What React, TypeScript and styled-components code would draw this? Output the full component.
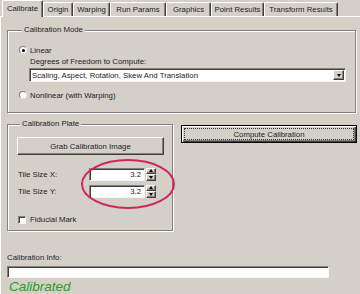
import React from 'react';
import styled, { createGlobalStyle } from 'styled-components';

const GlobalStyle = createGlobalStyle`
  html, body {
    margin: 0;
    padding: 0;
    background: #d4d0c8;
  }
  body {
    font-family: "Liberation Sans", Arial, sans-serif;
    font-size: 7.8px;
    color: #1c1c1c;
  }
`;

const TABS = [
  { label: 'Calibrate', w: 41 },
  { label: 'Origin', w: 30 },
  { label: 'Warping', w: 37 },
  { label: 'Run Params', w: 56 },
  { label: 'Graphics', w: 45 },
  { label: 'Point Results', w: 53 },
  { label: 'Transform Results', w: 74 },
];

const App = () => {
  return (
    <>
      <GlobalStyle />
      <Window>
        <TabBar>
          {TABS.map((t, i) => (
            <Tab key={t.label} $w={t.w} $active={i === 0}>
              {t.label}
            </Tab>
          ))}
        </TabBar>
        <Panel>
          <Group>
            <Legend>Calibration Mode</Legend>
            <OptionRow>
              <Radio $checked />
              <span>Linear</span>
            </OptionRow>
            <Indent>
              <Caption>Degrees of Freedom to Compute:</Caption>
              <Select>
                <SelectText>Scaling, Aspect, Rotation, Skew And Translation</SelectText>
                <DropButton>
                  <Arrow $down />
                </DropButton>
              </Select>
            </Indent>
            <OptionRow $gap={7}>
              <Radio />
              <span>Nonlinear (with Warping)</span>
            </OptionRow>
          </Group>

          <MiddleRow>
            <PlateGroup>
              <Legend>Calibration Plate</Legend>
              <PushButton>Grab Calibration Image</PushButton>
              <TileArea>
                <TileRow>
                  <TileLabel>Tile Size X:</TileLabel>
                  <NumberField>3.2</NumberField>
                  <Spinner>
                    <SpinHalf><Arrow /></SpinHalf>
                    <SpinHalf><Arrow $down /></SpinHalf>
                  </Spinner>
                </TileRow>
                <TileRow $gap={3}>
                  <TileLabel>Tile Size Y:</TileLabel>
                  <NumberField>3.2</NumberField>
                  <Spinner>
                    <SpinHalf><Arrow /></SpinHalf>
                    <SpinHalf><Arrow $down /></SpinHalf>
                  </Spinner>
                </TileRow>
                <Circle width="98" height="54" viewBox="0 0 98 54">
                  <ellipse cx="49" cy="27" rx="46" ry="24" fill="none" stroke="#d3235f" strokeWidth="2" />
                </Circle>
              </TileArea>
              <CheckRow>
                <CheckBox />
                <span>Fiducial Mark</span>
              </CheckRow>
            </PlateGroup>
            <ActionColumn>
              <DefaultButton>
                <FocusRing>Compute Calibration</FocusRing>
              </DefaultButton>
            </ActionColumn>
          </MiddleRow>

          <InfoLabel>Calibration Info:</InfoLabel>
          <InfoField />
          <Status>Calibrated</Status>
        </Panel>
      </Window>
    </>
  );
};

export default App;

const Window = styled.div`
  width: 360px;
  height: 294px;
  overflow: hidden;
  background: #d4d0c8;
  display: flex;
  flex-direction: column;
`;

const TabBar = styled.div`
  display: flex;
  align-items: flex-end;
  height: 17px;
  padding-left: 2px;
  box-sizing: border-box;
  border-bottom: 1px solid #fff;
`;

const Tab = styled.div<{ $w: number; $active?: boolean }>`
  width: ${(p) => p.$w}px;
  height: ${(p) => (p.$active ? 17 : 14)}px;
  margin-bottom: ${(p) => (p.$active ? -1 : 0)}px;
  padding-bottom: ${(p) => (p.$active ? 2 : 0)}px;
  box-sizing: border-box;
  border-top: 1px solid #fff;
  border-left: 1px solid #fff;
  border-right: 1px solid #404040;
  border-radius: 2px 2px 0 0;
  box-shadow: inset -1px 0 #808080;
  background: #d4d0c8;
  display: flex;
  align-items: center;
  justify-content: center;
  white-space: nowrap;
  position: relative;
  z-index: ${(p) => (p.$active ? 1 : 0)};
`;

const Panel = styled.div`
  flex: 1;
  display: flex;
  flex-direction: column;
  align-items: flex-start;
  padding: 8px 4px 0 6px;
  border-left: 1px solid #fff;
`;

const Group = styled.fieldset`
  align-self: stretch;
  margin: 0;
  min-width: 0;
  padding: 9px 9px 11px 11px;
  border: 1px solid #808080;
  box-shadow: inset 1px 1px #fff, 1px 1px #fff;
  display: flex;
  flex-direction: column;
  align-items: stretch;
`;

const Legend = styled.legend`
  padding: 0 2px;
  margin-left: 3px;
  line-height: 10px;
  height: 10px;
  background: #d4d0c8;
`;

const OptionRow = styled.div<{ $gap?: number }>`
  display: flex;
  align-items: center;
  gap: 3px;
  height: 12px;
  margin-top: ${(p) => p.$gap || 0}px;
`;

const Radio = styled.span<{ $checked?: boolean }>`
  width: 8px;
  height: 8px;
  box-sizing: border-box;
  border-radius: 50%;
  background: #fff;
  border: 1px solid;
  border-color: #808080 #e8e8e8 #e8e8e8 #808080;
  display: inline-flex;
  align-items: center;
  justify-content: center;
  &::after {
    content: '';
    width: 3px;
    height: 3px;
    border-radius: 50%;
    background: #000;
    display: ${(p) => (p.$checked ? 'block' : 'none')};
  }
`;

const Indent = styled.div`
  margin-left: 10px;
  display: flex;
  flex-direction: column;
`;

const Caption = styled.div`
  margin-top: 1px;
  padding-left: 1px;
  line-height: 10px;
`;

const sunken = `
  background: #fff;
  box-sizing: border-box;
  border: 1px solid;
  border-color: #808080 #f4f4f4 #f4f4f4 #808080;
  box-shadow: inset 1px 1px #404040;
`;

const raised = `
  background: #d4d0c8;
  box-sizing: border-box;
  border: 1px solid;
  border-color: #fff #404040 #404040 #fff;
  box-shadow: inset -1px -1px #808080;
`;

const Select = styled.div`
  ${sunken}
  margin-top: 1px;
  height: 14px;
  display: flex;
  align-items: center;
  padding: 0 1px 0 2px;
`;

const SelectText = styled.span`
  flex: 1;
  white-space: nowrap;
  overflow: hidden;
`;

const DropButton = styled.span`
  ${raised}
  width: 11px;
  height: 10px;
  display: flex;
  align-items: center;
  justify-content: center;
`;

const Arrow = styled.span<{ $down?: boolean }>`
  width: 0;
  height: 0;
  border-left: 2.5px solid transparent;
  border-right: 2.5px solid transparent;
  ${(p) => (p.$down ? 'border-top: 3px solid #000;' : 'border-bottom: 3px solid #000;')}
`;

const MiddleRow = styled.div`
  align-self: stretch;
  display: flex;
  gap: 8px;
  margin-top: 6px;
`;

const PlateGroup = styled(Group)`
  align-self: flex-start;
  width: 166px;
  flex: none;
  box-sizing: border-box;
  padding: 8px 8px 4px 9px;
`;

const PushButton = styled.div`
  ${raised}
  height: 18px;
  display: flex;
  align-items: center;
  justify-content: center;
`;

const TileArea = styled.div`
  position: relative;
  margin-top: 12px;
  display: flex;
  flex-direction: column;
`;

const TileRow = styled.div<{ $gap?: number }>`
  display: flex;
  align-items: center;
  height: 14px;
  margin-top: ${(p) => p.$gap || 0}px;
`;

const TileLabel = styled.span`
  width: 72px;
  padding-left: 1px;
  box-sizing: border-box;
`;

const NumberField = styled.div`
  ${sunken}
  width: 56px;
  height: 13px;
  text-align: right;
  padding-right: 3px;
  line-height: 11px;
`;

const Spinner = styled.div`
  width: 10px;
  height: 13px;
  margin-left: 1px;
  display: flex;
  flex-direction: column;
`;

const SpinHalf = styled.span`
  ${raised}
  flex: 1;
  display: flex;
  align-items: center;
  justify-content: center;
`;

const Circle = styled.svg`
  position: absolute;
  left: 62px;
  top: -10px;
  overflow: visible;
  pointer-events: none;
`;

const CheckRow = styled.div`
  display: flex;
  align-items: center;
  gap: 4px;
  height: 13px;
  margin-top: 15px;
  padding-left: 1px;
`;

const CheckBox = styled.span`
  ${sunken}
  width: 8px;
  height: 8px;
`;

const ActionColumn = styled.div`
  flex: 1;
  padding-top: 6px;
  margin-right: -1px;
  display: flex;
  flex-direction: column;
`;

const DefaultButton = styled.div`
  height: 18px;
  box-sizing: border-box;
  border: 1px solid #000;
  background: #d4d0c8;
  box-shadow: inset 1px 1px #fff, inset -1px -1px #404040, inset -2px -2px #808080;
  display: flex;
`;

const FocusRing = styled.span`
  flex: 1;
  margin: 2px;
  border: 1px dotted #333;
  display: flex;
  align-items: center;
  justify-content: center;
`;

const InfoLabel = styled.div`
  margin-top: 22px;
  line-height: 10px;
`;

const InfoField = styled.div`
  ${sunken}
  margin-top: 3px;
  width: 322px;
  height: 12px;
`;

const Status = styled.div`
  margin-top: 1px;
  padding-left: 2px;
  font-size: 13.5px;
  font-style: italic;
  line-height: 16px;
  color: #24a024;
`;
